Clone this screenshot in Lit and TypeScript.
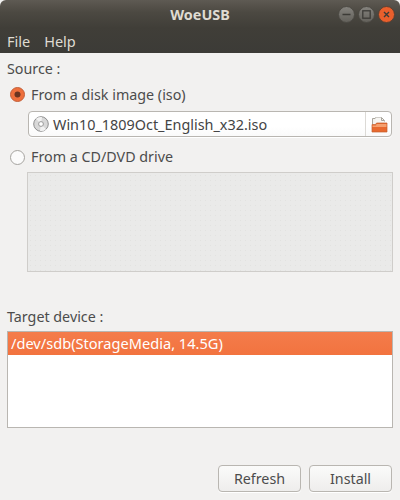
import { LitElement, html, css } from "lit";
import { customElement } from "lit/decorators.js";

@customElement("app-root")
export class AppRoot extends LitElement {
  static styles = css`
    :host { display: block; width: 400px; height: 500px; background: #f2f1f0; overflow: hidden; font-family: "Noto Sans", "Open Sans", sans-serif; font-size: 14.3px; color: #3c3c3c; }
    .win { width: 400px; height: 500px; display: flex; flex-direction: column; background: #f2f1f0; border-radius: 6px 6px 0 0; overflow: hidden; }
    .head { height: 53px; flex: none; background: linear-gradient(#5e5a53 0, #4c4942 12px, #403e38 28px, #3c3b37 53px); display: flex; flex-direction: column; color: #dfdbd2; }
    .title { height: 28px; flex: none; display: flex; align-items: center; justify-content: center; position: relative; font-weight: 700; font-size: 14.4px; color: #dfdbd2; box-sizing: border-box; }
    .ctrls { position: absolute; right: 5px; top: 6px; display: flex; gap: 3px; }
    .ctrls svg { display: block; width: 17px; height: 17px; }
    .menu { display: flex; gap: 14px; padding: 4px 7px 0; font-size: 14.5px; line-height: 19px; }
    .body { flex: 1; display: flex; flex-direction: column; padding: 6px 7px 8px; color: #4c4c4c; }
    .label { line-height: 19px; }
    .radio { display: flex; align-items: center; gap: 6px; padding-left: 3px; height: 20px; color: #4c4c4c; }
    .r1 { margin-top: 6px; }
    .r2 { margin-top: 10px; }
    .r2 span { padding-bottom: 2px; }
    .dot { width: 15px; height: 15px; flex: none; display: block; }
    .field { margin: 7px 1px 0 21px; height: 26px; box-sizing: border-box; border: 1px solid #b9b6b1; border-radius: 4px; background: linear-gradient(#fff, #fff 60%, #fafafa); display: flex; align-items: center; box-shadow: 0 1px 0 #fff; }
    .disc { width: 16px; height: 16px; margin-left: 4px; flex: none; }
    .fname { flex: 1; margin-left: 4px; font-size: 14.4px; color: #444; }
    .sep { width: 1px; height: 24px; background: #dcdad6; flex: none; }
    .folder { width: 17px; height: 17px; margin: 0 3px 0 5px; flex: none; }
    .box { margin: 5px 0 0 20px; height: 100px; box-sizing: border-box; border: 1px solid #cfcdca; background: #eaeae9; background-image: radial-gradient(#e2e2e0 0.6px, transparent 0.7px); background-size: 5px 5px; }
    .target { margin-top: 35px; }
    .list { margin-top: 5px; height: 97px; box-sizing: border-box; border: 1px solid #b9b6b1; background: #fff; }
    .row { height: 23px; background: linear-gradient(#f47c4b, #f2733f); color: #fff; line-height: 23px; padding-left: 3px; font-size: 14.6px; }
    .btns { margin-top: auto; display: flex; justify-content: flex-end; gap: 8px; padding-right: 1px; }
    .btn { width: 83px; height: 27px; box-sizing: border-box; border: 1px solid #b9b6b1; border-radius: 4px; background: linear-gradient(#fbfbfa, #eeedec); font: inherit; color: #4c4c4c; padding: 0; box-shadow: 0 1px 0 #fff; }
  `;

  render() {
    return html`
      <div class="win">
        <div class="head">
          <div class="title">WoeUSB
            <div class="ctrls">
              <svg viewBox="0 0 17 17"><defs><linearGradient id="g" x1="0" y1="0" x2="0" y2="1"><stop offset="0" stop-color="#85837e"/><stop offset="1" stop-color="#62605a"/></linearGradient></defs><circle cx="8.5" cy="8.5" r="8" fill="url(#g)" stroke="#4b4943"/><path d="M4.500 8.500h8" stroke="#3c3b37" stroke-width="1.4"/></svg>
              <svg viewBox="0 0 17 17"><circle cx="8.5" cy="8.5" r="8" fill="url(#g)" stroke="#4b4943"/><rect x="4.800" y="4.800" width="7.400" height="7.400" fill="none" stroke="#3c3b37" stroke-width="1.300"/></svg>
              <svg viewBox="0 0 17 17"><circle cx="8.5" cy="8.5" r="8" fill="#ea5f2c" stroke="#5a4032"/><path d="M6 6l5 5M11 6l-5 5" stroke="#3c3b37" stroke-width="1.400"/></svg>
            </div>
          </div>
          <div class="menu"><span>File</span><span>Help</span></div>
        </div>
        <div class="body">
          <div class="label">Source :</div>
          <div class="radio r1">
            <svg class="dot" viewBox="0 0 15 15"><circle cx="7.5" cy="7.5" r="7" fill="#ee6f3c" stroke="#c2603a"/><circle cx="7.5" cy="7.5" r="3" fill="#6b3420"/></svg>
            <span>From a disk image (iso)</span>
          </div>
          <div class="field">
            <svg class="disc" viewBox="0 0 16 16"><circle cx="8" cy="8" r="7.300" fill="#d8d8d8" stroke="#8e8e8e"/><path d="M8 8L3 2.800A7 7 0 0 1 9 1zM8 8l5 5.200A7 7 0 0 1 7 15z" fill="#f2f2f2"/><circle cx="8" cy="8" r="2.400" fill="#fff" stroke="#9a9a9a"/></svg>
            <span class="fname">Win10_1809Oct_English_x32.iso</span>
            <span class="sep"></span>
            <svg class="folder" viewBox="0 0 17 17"><path d="M1.500 8V2.500h3v-1h6l3 3V6" fill="#f4f2ee" stroke="#a9a59d"/><path d="M4.500 1.500h6v3h3v3h-9z" fill="#f7f6f3"/><path d="M10.500 1.500v3h3" fill="none" stroke="#a9a59d"/><path d="M1 16V8.500h3.500l1-1.500H16v9z" fill="#e8692f" stroke="#c2602f" stroke-width=".7"/><path d="M5.500 8H15.500v3H1.500V9.500h3.500z" fill="#f5a06f"/></svg>
          </div>
          <div class="radio r2">
            <svg class="dot" viewBox="0 0 15 15"><circle cx="7.5" cy="7.500" r="7" fill="#fbfbfb" stroke="#a5a39f"/></svg>
            <span>From a CD/DVD drive</span>
          </div>
          <div class="box"></div>
          <div class="label target">Target device :</div>
          <div class="list"><div class="row">/dev/sdb(StorageMedia, 14.5G)</div></div>
          <div class="btns"><button class="btn">Refresh</button><button class="btn">Install</button></div>
        </div>
      </div>
    `;
  }
}
